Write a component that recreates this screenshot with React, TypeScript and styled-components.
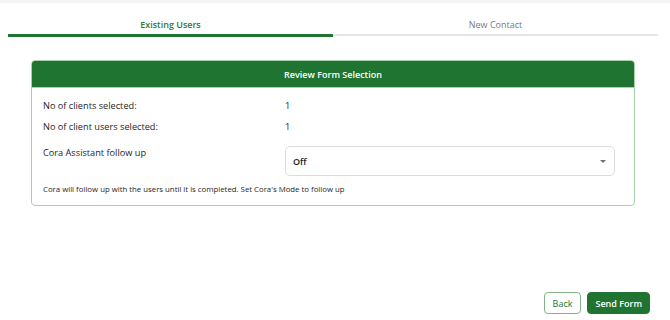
import { useState } from "react";
import styled, { createGlobalStyle } from "styled-components";

const GlobalStyle = createGlobalStyle`
	html, body {
		margin: 0;
		padding: 0;
		background: #ffffff;
		font-family: "Open Sans", "Liberation Sans", sans-serif;
	}
`;

const tabs = ["Existing Users", "New Contact"];

export default function App() {
	const [active, setActive] = useState(0);
	const [followUp, setFollowUp] = useState("Off");

	return (
		<>
			<GlobalStyle />
			<Page>
				<TopBand />
				<TabBar>
					{tabs.map((t, i) => (
						<Tab key={t} $active={i === active} onClick={() => setActive(i)}>
							{t}
						</Tab>
					))}
				</TabBar>
				<Card>
					<CardHeader>Review Form Selection</CardHeader>
					<CardBody>
						<Row>
							<Label>No of clients selected:</Label>
							<Value>1</Value>
						</Row>
						<Row>
							<Label>No of client users selected:</Label>
							<Value>1</Value>
						</Row>
						<SelectRow>
							<Label>Cora Assistant follow up</Label>
							<SelectBox>
								<Select value={followUp} onChange={(e) => setFollowUp(e.target.value)}>
									<option value="Off">Off</option>
									<option value="On">On</option>
								</Select>
								<Caret />
							</SelectBox>
						</SelectRow>
						<Hint>Cora will follow up with the users until it is completed. Set Cora's Mode to follow up</Hint>
					</CardBody>
				</Card>
				<Spacer />
				<Actions>
					<Button $variant="outline">Back</Button>
					<Button $variant="solid">Send Form</Button>
				</Actions>
			</Page>
		</>
	);
}

const Page = styled.div`
	width: 670px;
	height: 320px;
	display: flex;
	flex-direction: column;
	box-sizing: border-box;
	padding-bottom: 6px;
`;

const TopBand = styled.div`
	height: 3px;
	background: #f4f4f4;
`;

const TabBar = styled.div`
	display: flex;
	align-items: flex-start;
	margin: 0 12px 0 8px;
	padding-top: 10px;
`;

const Tab = styled.button<{ $active: boolean }>`
	flex: 1;
	height: ${({ $active }) => ($active ? "24px" : "23px")};
	border: none;
	background: none;
	padding: 2px 0 0;
	font-family: inherit;
	font-size: 9px;
	font-weight: ${({ $active }) => ($active ? 600 : 400)};
	color: ${({ $active }) => ($active ? "#2e7d32" : "#7a7a7a")};
	border-bottom: ${({ $active }) => ($active ? "3px solid #1e7430" : "2px solid #e6e6e6")};
	cursor: pointer;
`;

const Card = styled.div`
	margin: 23px 35px 0 31px;
	border: 1px solid #a9d1ad;
	border-radius: 4px;
	overflow: hidden;
`;

const CardHeader = styled.div`
	height: 26px;
	background: #1e7430;
	color: #ffffff;
	font-size: 9px;
	font-weight: 600;
	display: flex;
	align-items: center;
	justify-content: center;
	border-bottom: 1px solid #a9d1ad;
`;

const CardBody = styled.div`
	padding: 7px 19px 11px 11px;
	display: flex;
	flex-direction: column;
`;

const Row = styled.div`
	display: grid;
	grid-template-columns: 242px 1fr;
	height: 21px;
	align-items: center;
`;

const SelectRow = styled.div`
	display: grid;
	grid-template-columns: 242px 1fr;
	align-items: start;
	margin-top: 9px;
`;

const Label = styled.div`
	font-size: 9.2px;
	color: #262626;
	line-height: 14px;
`;

const Value = styled.div`
	font-size: 9.2px;
	color: #262626;
`;

const SelectBox = styled.div`
	position: relative;
	height: 30px;
`;

const Select = styled.select`
	appearance: none;
	width: 100%;
	height: 30px;
	box-sizing: border-box;
	border: 1px solid #dcdcdc;
	border-radius: 5px;
	background: #ffffff;
	padding: 0 24px 0 7px;
	font-family: inherit;
	font-size: 9px;
	font-weight: 600;
	color: #222222;
	outline: none;
`;

const Caret = styled.span`
	position: absolute;
	right: 9px;
	top: 14px;
	width: 0;
	height: 0;
	border-left: 3px solid transparent;
	border-right: 3px solid transparent;
	border-top: 3px solid #707070;
	pointer-events: none;
`;

const Hint = styled.div`
	margin-top: 8px;
	font-size: 7.8px;
	color: #262626;
`;

const Spacer = styled.div`
	flex: 1;
`;

const Actions = styled.div`
	display: flex;
	justify-content: flex-end;
	gap: 6px;
	padding-right: 20px;
`;

const Button = styled.button<{ $variant: "outline" | "solid" }>`
	height: 22px;
	padding: 0 ${({ $variant }) => ($variant === "solid" ? "7px" : "8px")};
	border-radius: 4px;
	font-family: inherit;
	font-size: 9px;
	font-weight: ${({ $variant }) => ($variant === "solid" ? 600 : 400)};
	cursor: pointer;
	border: 1px solid ${({ $variant }) => ($variant === "solid" ? "#1e7430" : "#7fb487")};
	background: ${({ $variant }) => ($variant === "solid" ? "#1e7430" : "#ffffff")};
	color: ${({ $variant }) => ($variant === "solid" ? "#ffffff" : "#1e7430")};
`;
